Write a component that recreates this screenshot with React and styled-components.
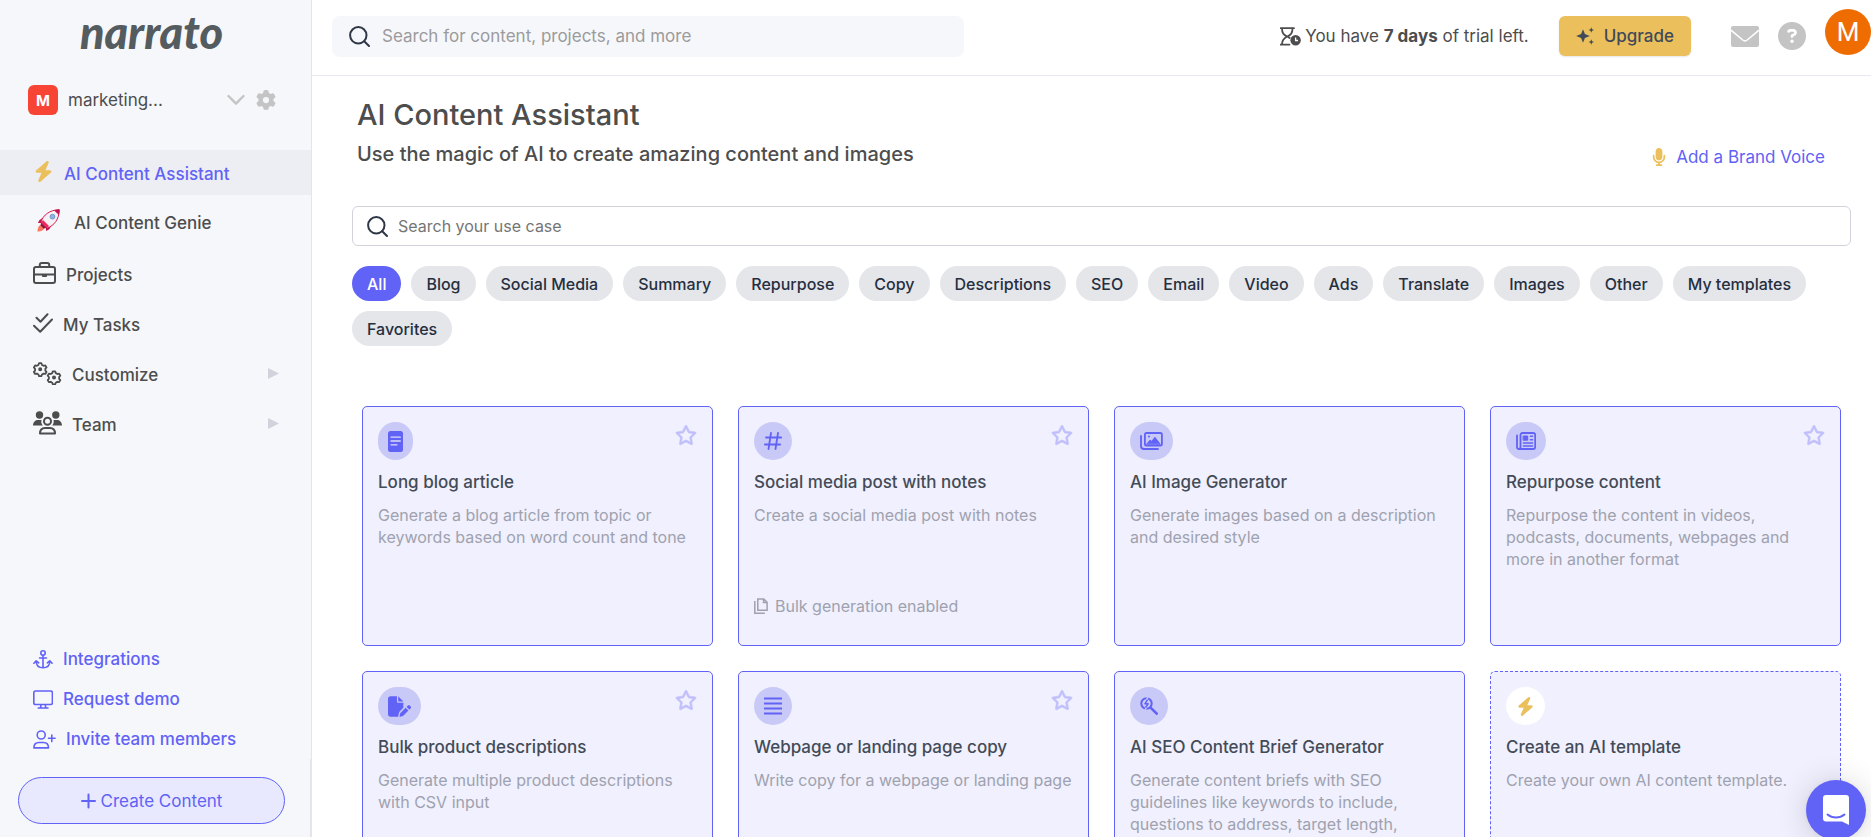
import React, { useState } from 'react';
import styled, { createGlobalStyle, css } from 'styled-components';
import { FaBolt, FaGear, FaCircleQuestion, FaMicrophone, FaFilePen, FaRegStar } from 'react-icons/fa6';

const GlobalStyle = createGlobalStyle`
  * {
    box-sizing: border-box;
  }

  body {
    margin: 0;
    background: #fff;
    color: #4d4d4d;
    font-family: 'Inter', 'Liberation Sans', sans-serif;
    overflow: hidden;
  }

  button,
  input {
    font-family: inherit;
  }

  svg {
    display: block;
    flex-shrink: 0;
  }
`;

const Layout = styled.div`
  display: flex;
  height: 100vh;
`;

/* ---------- sidebar ---------- */

const Sidebar = styled.aside`
  display: flex;
  flex-direction: column;
  flex: 0 0 312px;
  background: #f6f7fb;
  border-right: 1px solid #e4e4ea;
`;

const Logo = styled.a`
  display: block;
  height: 75px;
  padding: 8px 8px 0 0;
  color: #545c60;
  font-family: 'Lato', sans-serif;
  font-size: 45px;
  font-style: italic;
  font-weight: 900;
  line-height: 48px;
  text-align: center;
  text-decoration: none;
`;

const Workspace = styled.div`
  display: flex;
  align-items: center;
  height: 50px;
  margin-bottom: 25px;
  padding: 0 35px 0 28px;
`;

const WorkspaceBadge = styled.span`
  display: flex;
  align-items: center;
  justify-content: center;
  width: 30px;
  height: 30px;
  border-radius: 6px;
  background: #f74435;
  color: #fff;
  font-size: 15px;
  font-weight: 700;
`;

const WorkspaceName = styled.span`
  flex: 1;
  padding-left: 10px;
  font-size: 17px;
`;

const IconButton = styled.button`
  display: flex;
  padding: 0;
  border: 0;
  background: none;
  color: ${(props) => props.$color || '#c4c4c4'};
  cursor: pointer;
`;

const WorkspaceActions = styled.div`
  display: flex;
  align-items: center;
  gap: 11px;
`;

const Nav = styled.nav`
  display: flex;
  flex-direction: column;
`;

const NavItem = styled.a`
  display: flex;
  align-items: center;
  gap: ${(props) => (props.$inset ? 14 : 10)}px;
  height: ${(props) => props.$height || 50}px;
  padding: 0 32px 0 ${(props) => (props.$inset ? 37 : 33)}px;
  color: #4d4d4d;
  font-size: 17px;
  font-weight: 500;
  text-decoration: none;

  ${(props) =>
    props.$active &&
    css`
      padding-top: 2px;
      background: #edeef3;
      color: #6162f6;
    `}
`;

const NavIcon = styled.span`
  display: flex;
  justify-content: center;
  min-width: 20px;
  padding-bottom: 4px;
  color: ${(props) => props.$color || 'inherit'};
`;

const NavLabel = styled.span`
  flex: 1;
`;

const SidebarLinks = styled.div`
  display: flex;
  flex-direction: column;
  margin-top: auto;
`;

const SidebarLink = styled.a`
  display: flex;
  align-items: center;
  gap: 10px;
  height: 40px;
  padding-left: 33px;
  color: #6162f6;
  font-size: 17px;
  font-weight: 500;
  text-decoration: none;
`;

const SidebarFooter = styled.div`
  height: 78px;
  padding: 18px 25px 0 18px;
  border-right: 1px solid #e4e4ea;
`;

const CreateButton = styled.button`
  display: flex;
  align-items: center;
  justify-content: center;
  gap: 5px;
  width: 100%;
  height: 47px;
  border: 1px solid #6162f6;
  border-radius: 24px;
  background: #e8e9fe;
  color: #6162f6;
  font-size: 17px;
  cursor: pointer;
`;

/* ---------- top bar ---------- */

const Main = styled.div`
  display: flex;
  flex: 1;
  flex-direction: column;
  min-width: 0;
`;

const TopBar = styled.header`
  display: flex;
  align-items: center;
  flex: 0 0 76px;
  padding: 0 0 3px 20px;
  border-bottom: 1px solid #e8e8ef;
`;

const TopSearch = styled.label`
  display: flex;
  align-items: center;
  gap: 12px;
  flex: 0 1 632px;
  height: 41px;
  margin-right: auto;
  padding: 0 17px;
  border-radius: 8px;
  background: #f6f7fb;
  color: #2f3747;
`;

const SearchInput = styled.input`
  flex: 1;
  min-width: 0;
  padding: 0;
  border: 0;
  outline: 0;
  background: none;
  color: #4d4d4d;
  font-size: ${(props) => props.$size}px;

  &::placeholder {
    color: ${(props) => props.$placeholder};
    opacity: 1;
  }
`;

const Trial = styled.div`
  display: flex;
  align-items: center;
  gap: 4px;
  margin-right: 30px;
  font-size: 17px;
  white-space: nowrap;

  strong {
    font-weight: 700;
  }
`;

const UpgradeButton = styled.button`
  display: flex;
  align-items: center;
  gap: 9px;
  height: 40px;
  margin-right: 40px;
  padding: 0 17px;
  border: 0;
  border-radius: 6px;
  background: #ebc05c;
  box-shadow: 0 1px 2px rgba(0, 0, 0, 0.1);
  color: #424a59;
  font-size: 17px;
  font-weight: 500;
  cursor: pointer;
`;

const TopActions = styled.div`
  display: flex;
  align-items: center;
  gap: 19px;
`;

const Avatar = styled.button`
  width: 46px;
  height: 46px;
  margin-bottom: 8px;
  padding: 0;
  border: 0;
  border-radius: 50%;
  background: #ef6c00;
  color: #fff;
  font-family: 'Roboto', sans-serif;
  font-size: 26px;
  cursor: pointer;
`;

/* ---------- content ---------- */

const Content = styled.main`
  flex: 1;
  min-height: 0;
  padding: 20px 20px 0 40px;
  overflow: hidden;
`;

const PageHead = styled.div`
  display: flex;
  align-items: flex-end;
  justify-content: space-between;
  margin-bottom: 35px;
  padding: 0 26px 0 5px;
`;

const Title = styled.h1`
  margin: 0;
  font-size: 29px;
  font-weight: 500;
  line-height: 37px;
`;

const Subtitle = styled.p`
  margin: 9px 0 5px;
  font-size: 20px;
  font-weight: 500;
  line-height: 24px;
`;

const BrandVoice = styled.a`
  display: flex;
  align-items: center;
  gap: 8px;
  margin-bottom: 4px;
  color: #6162f6;
  font-size: 17px;
  line-height: 20px;
  text-decoration: none;
`;

const UseCaseSearch = styled.label`
  display: flex;
  align-items: center;
  gap: 10px;
  height: 40px;
  padding: 0 14px;
  border: 1px solid #d2d2dc;
  border-radius: 6px;
  color: #2f3747;
`;

const Chips = styled.div`
  display: flex;
  flex-wrap: wrap;
  gap: 10px;
  margin: 20px 0 60px;
`;

const Chip = styled.button`
  height: 35px;
  padding: 0 15px;
  border: 0;
  border-radius: 18px;
  background: ${(props) => (props.$active ? '#6162f6' : '#e5e6ea')};
  color: ${(props) => (props.$active ? '#fff' : '#252f3f')};
  font-size: 16px;
  font-weight: 500;
  cursor: pointer;
`;

const CardGrid = styled.div`
  display: grid;
  grid-template-columns: repeat(4, 1fr);
  gap: 25px;
  padding: 0 10px;
`;

const Card = styled.article`
  display: flex;
  flex-direction: column;
  min-height: 240px;
  padding: 15px;
  border: 1px ${(props) => (props.$dashed ? 'dashed' : 'solid')} #6162f6;
  border-radius: 5px;
  background: #f0f0fe;
`;

const CardTop = styled.div`
  display: flex;
  align-items: flex-start;
  justify-content: space-between;
`;

const CardIcon = styled.span`
  display: flex;
  align-items: center;
  justify-content: center;
  height: 38px;
  padding: 0 10px;
  border-radius: 19px;
  background: ${(props) => (props.$plain ? '#fff' : '#c9c9f7')};
  color: ${(props) => (props.$plain ? '#ebc05c' : '#6162f6')};
`;

const StarButton = styled(IconButton)`
  padding-top: 2px;

  path {
    stroke: currentColor;
    stroke-width: 16px;
  }
`;

const CardTitle = styled.h2`
  margin: 11px 0 11px;
  color: #434b57;
  font-size: 17px;
  font-weight: 500;
  line-height: 22px;
`;

const CardText = styled.p`
  margin: 0;
  color: #9fa2ae;
  font-size: 16px;
  line-height: 22px;
`;

const BulkNote = styled.div`
  display: flex;
  align-items: center;
  gap: 7px;
  margin-top: auto;
  padding-bottom: 13px;
  color: #9fa2ae;
  font-size: 16px;
  line-height: 22px;
`;

const ChatLauncher = styled.button`
  position: fixed;
  right: 5px;
  bottom: -3px;
  display: flex;
  align-items: center;
  justify-content: center;
  width: 60px;
  height: 60px;
  padding: 0;
  border: 0;
  border-radius: 50%;
  background: #6162f6;
  box-shadow: 0 1px 6px rgba(0, 0, 0, 0.06), 0 2px 32px rgba(0, 0, 0, 0.16);
  cursor: pointer;
`;

/* ---------- icons ---------- */

const line = {
  fill: 'none',
  stroke: 'currentColor',
  strokeWidth: 2,
  strokeLinecap: 'round',
  strokeLinejoin: 'round',
};

const SearchIcon = () => (
  <svg width="21" height="21" viewBox="0 0 21 21" {...line}>
    <circle cx="9.3" cy="9.3" r="8.2" />
    <path d="M15.2 15.2L20 20" />
  </svg>
);

const RocketIcon = () => (
  <svg width="23" height="23" viewBox="0 0 23 23">
    <path d="M1 14c1-3 3-5 7-5l-3 5zM9 22c3-1 5-3 5-7l-5 3z" fill="#c2154f" />
    <path d="M4 13C6 6 13 .8 22.300.7 22.300 10 17 17 10 19z" fill="#f4f0f4" stroke="#d81b56" strokeWidth="1" />
    <path d="M17 1.200C19 .8 21 .5 22.500.5 22.500 2 22.200 4 21.800 6z" fill="#c2154f" />
    <path d="M4 13.500L6 11l6 6-2.500 2z" fill="#ee2a5d" />
    <circle cx="15.500" cy="7.700" r="2.400" fill="#86b5e6" stroke="#5b7fb5" strokeWidth=".7" />
    <path d="M5 15.500C1.500 16 .6 19 .5 22.500 4 22.500 7 21.500 7.500 18z" fill="#fb7a5c" />
    <path d="M4 13.500l5.500 5.500-3 .6L3.600 16.500z" fill="#8e1443" />
  </svg>
);

const BriefcaseIcon = () => (
  <svg width="23" height="22" viewBox="0 0 23 22" {...line}>
    <rect x="1" y="5" width="21" height="16" rx="2" />
    <path d="M6.800 5V2.800c0-1.100.7-1.800 1.800-1.800h5.800c1.100 0 1.800.7 1.800 1.800V5M1 12.500h21" />
    <path d="M9 13h5v1.200c0 .5-.3.800-.8.800H9.800c-.5 0-.8-.3-.8-.8z" fill="currentColor" stroke="none" />
  </svg>
);

const TasksIcon = () => (
  <svg width="20" height="20" viewBox="0 0 20 20" {...line}>
    <path d="M3.500 4.800l4 4L14.500 1.200" />
    <path d="M1 12.800l6.200 6L19 6.500" />
  </svg>
);

// six-lobed cog outline used twice in the customize icon
const cog =
  'M-1.300-6.200h2.600l.7 1.900 1.700 1 2-.4 1.300 2.200-1.300 1.500v2l1.300 1.500-1.300 2.200-2-.4-1.700 1-.7 1.900h-2.600l-.7-1.900-1.700-1-2 .4-1.300-2.200 1.300-1.500v-2l-1.300-1.500 1.300-2.200 2 .4 1.700-1z';

const CustomizeIcon = () => (
  <svg width="29" height="23" viewBox="0 0 29 23" {...line}>
    <path transform="translate(7.200 6.800) scale(.9)" d={cog} />
    <circle cx="7.200" cy="7.200" r="1" />
    <path transform="translate(21 15) scale(.9)" d={cog} />
    <circle cx="21" cy="15.400" r="1" />
  </svg>
);

const TeamIcon = () => (
  <svg width="29" height="24" viewBox="0 0 29 24">
    <g fill="currentColor">
      <circle cx="6.500" cy="4" r="3.700" />
      <circle cx="22.800" cy="4" r="3.700" />
      <path d="M0 14.500C0 11 2.500 9 5 9h3.500c-.6 2 0 4 1.300 5.500zM29 14.500C29 11 26.500 9 24 9h-3.500c.6 2 0 4-1.300 5.500z" />
    </g>
    <g fill="none" stroke="currentColor" strokeWidth="2" strokeLinejoin="round">
      <circle cx="14.500" cy="10.300" r="3.500" />
      <path d="M7 22.500c0-3.800 2.300-5.600 5-5.600h5c2.700 0 5 1.800 5 5.600z" />
    </g>
  </svg>
);

const AnchorIcon = () => (
  <svg width="20" height="19" viewBox="0 0 20 19" {...line} strokeWidth="1.600">
    <circle cx="10" cy="3" r="2.200" />
    <path d="M10 5.200V17.800M6.500 8h7M.9 13.200l2.300-2.400 2.500 2M19.100 13.200l-2.300-2.400-2.500 2M3.200 11c0 4.500 2.800 6.800 6.800 6.800s6.800-2.300 6.800-6.800" />
  </svg>
);

const MonitorIcon = () => (
  <svg width="20" height="19" viewBox="0 0 20 19" {...line} strokeWidth="1.600">
    <rect x=".8" y="1" width="18.600" height="13.500" rx="1.800" />
    <path d="M8 14.800l-.5 3M12.300 14.800l.5 3M5.200 18h9.800" />
  </svg>
);

const InviteIcon = () => (
  <svg width="23" height="19" viewBox="0 0 23 19" {...line} strokeWidth="1.600">
    <circle cx="8.200" cy="5" r="4" />
    <path d="M.9 17.900c0-3.600 2-5.400 5-5.400h4.600c3 0 5 1.800 5 5.400zM18.800 5v6.600M15.500 8.300h6.600" />
  </svg>
);

const PlusIcon = () => (
  <svg width="15" height="16" viewBox="0 0 15 16" {...line}>
    <path d="M7.500 1.500v13M1 8h13" />
  </svg>
);

const ChevronIcon = () => (
  <svg width="18" height="12" viewBox="0 0 18 12" {...line} strokeWidth="2.400">
    <path d="M1.500 2L9 9.700 16.500 2" />
  </svg>
);

const ArrowIcon = () => (
  <svg width="11" height="15" viewBox="0 0 11 15">
    <path d="M0 0l11 5.500L0 11z" fill="#d2d2dc" />
  </svg>
);

const HourglassIcon = () => (
  <svg width="21" height="19" viewBox="0 0 21 19">
    <path
      d="M.5 1.200h13.500M.5 17.600h9M2 1.500c0 4.500 1.500 6 5 8-3.500 2-5 3.600-5 8M12.500 1.500c0 4.500-1.500 6-5 8l2.200 1.500"
      {...line}
      strokeWidth="1.800"
    />
    <circle cx="15.600" cy="13.300" r="5.200" fill="currentColor" />
    <path d="M15.600 10.500v3h2.400" fill="none" stroke="#fff" strokeWidth="1.300" />
  </svg>
);

const SparkleIcon = () => (
  <svg width="19" height="18" viewBox="0 0 19 18" fill="currentColor">
    <path d="M7 2.200l1.900 4.900 4.900 1.900-4.900 1.900L7 15.800l-1.900-4.900L.2 9l4.900-1.900z" />
    <path d="M15.300.2l.8 2 2 .8-2 .8-.8 2-.8-2-2-.8 2-.8zM15.300 12.200l.8 2 2 .8-2 .8-.8 2-.8-2-2-.8 2-.8z" />
  </svg>
);

const MailIcon = () => (
  <svg width="28" height="21" viewBox="0 0 28 21">
    <rect width="28" height="21" rx="2" fill="currentColor" />
    <path d="M0 4.200l11.800 9.800c1.400 1.100 3 1.100 4.400 0L28 4.200" fill="none" stroke="#fff" strokeWidth="1.500" />
  </svg>
);

const ArticleIcon = () => (
  <svg width="15" height="21" viewBox="0 0 15 21">
    <rect width="15" height="21" rx="2.500" fill="currentColor" />
    <path d="M3 6.200h9.300M3 10h9.300M3 13.800h6" stroke="#dcdcfb" strokeWidth="1.300" strokeLinecap="round" />
  </svg>
);

const HashIcon = () => (
  <svg width="18" height="18" viewBox="0 0 18 18" {...line} strokeWidth="1.800">
    <path d="M7 1L4.500 17M14 1l-2.500 16M2 5.500h15.200M.9 12.500h15.200" />
  </svg>
);

const ImagesIcon = () => (
  <svg width="23" height="18" viewBox="0 0 23 18" {...line} strokeWidth="1.800">
    <rect x="4.900" y="1" width="17" height="12.500" rx="1.600" />
    <path d="M1 4v10c0 2 1 3 3 3h14" />
    <path d="M7 11.800l3.200-3.800 1.500 1.500 3.200-4.200 5 6.500z" fill="currentColor" strokeWidth="1" />
    <circle cx="9" cy="4.600" r="1" fill="currentColor" stroke="none" />
  </svg>
);

const NewsIcon = () => (
  <svg width="20" height="18" viewBox="0 0 20 18" {...line} strokeWidth="1.800">
    <path d="M4.500 15V3c0-1.300.7-2 2-2h10.700c1.300 0 2 .7 2 2v12c0 1.300-.7 2-2 2H2.800C1.600 17 1 16.200 1 15V3.500M4.500 15c0 1.200-.7 2-1.700 2" />
    <path d="M7.500 4h4.200v4.200H7.500z" fill="currentColor" strokeWidth="1" />
    <path d="M14.500 4.300h2M14.500 7.800h2M7.500 11h9M7.500 14h9" strokeWidth="1.600" />
  </svg>
);

const LinesIcon = () => (
  <svg width="18" height="18" viewBox="0 0 18 18">
    <path d="M0 1.500h18M0 6.500h18M0 11.500h18M0 16.500h18" stroke="currentColor" strokeWidth="2" />
  </svg>
);

const SearchBoltIcon = () => (
  <svg width="18" height="18" viewBox="0 0 18 18" {...line}>
    <circle cx="6.500" cy="6.500" r="5.200" strokeWidth="2" />
    <path d="M10.800 10.800l5.900 5.900" strokeWidth="2.600" />
    <path d="M7.600 0L6.800 3M6.200 10L5.400 13" stroke="#c9c9f7" strokeWidth="1.600" />
    <path d="M7.300 3.200L4.900 6.800h3.200L5.900 10" strokeWidth="1.500" />
  </svg>
);

const CopyIcon = () => (
  <svg width="14" height="16" viewBox="0 0 14 16" fill="none" stroke="currentColor" strokeWidth="1.500">
    <path d="M3.800 .9h6l3.300 3.400v8H3.800zM9.500 1v3.600h3.500M.8 3v12.200h10" />
  </svg>
);

const ChatIcon = () => (
  <svg width="28" height="32" viewBox="0 0 28 32">
    <path d="M4 1h20a3 3 0 0 1 3 3v27l-7-3.500H4a3 3 0 0 1-3-3V4a3 3 0 0 1 3-3z" fill="#fff" />
    <path d="M5.500 20.500c5 4 12 4 17 0" fill="none" stroke="#6162f6" strokeWidth="2" strokeLinecap="round" />
  </svg>
);

/* ---------- data ---------- */

const navItems = [
  { label: 'AI Content Assistant', icon: <FaBolt size={21} />, color: '#ebc05c', height: 45, active: true },
  { label: 'AI Content Genie', icon: <RocketIcon />, height: 55, inset: true },
  { label: 'Projects', icon: <BriefcaseIcon /> },
  { label: 'My Tasks', icon: <TasksIcon /> },
  { label: 'Customize', icon: <CustomizeIcon />, expandable: true },
  { label: 'Team', icon: <TeamIcon />, expandable: true },
];

const sideLinks = [
  { label: 'Integrations', icon: <AnchorIcon /> },
  { label: 'Request demo', icon: <MonitorIcon /> },
  { label: 'Invite team members', icon: <InviteIcon /> },
];

const categories = [
  'All',
  'Blog',
  'Social Media',
  'Summary',
  'Repurpose',
  'Copy',
  'Descriptions',
  'SEO',
  'Email',
  'Video',
  'Ads',
  'Translate',
  'Images',
  'Other',
  'My templates',
  'Favorites',
];

const cards = [
  {
    title: 'Long blog article',
    text: 'Generate a blog article from topic or keywords based on word count and tone',
    icon: <ArticleIcon />,
    star: true,
  },
  {
    title: 'Social media post with notes',
    text: 'Create a social media post with notes',
    icon: <HashIcon />,
    star: true,
    bulk: true,
  },
  {
    title: 'AI Image Generator',
    text: 'Generate images based on a description and desired style',
    icon: <ImagesIcon />,
  },
  {
    title: 'Repurpose content',
    text: 'Repurpose the content in videos, podcasts, documents, webpages and more in another format',
    icon: <NewsIcon />,
    star: true,
  },
  {
    title: 'Bulk product descriptions',
    text: 'Generate multiple product descriptions with CSV input',
    icon: <FaFilePen size={23} />,
    star: true,
  },
  {
    title: 'Webpage or landing page copy',
    text: 'Write copy for a webpage or landing page',
    icon: <LinesIcon />,
    star: true,
  },
  {
    title: 'AI SEO Content Brief Generator',
    text: 'Generate content briefs with SEO guidelines like keywords to include, questions to address, target length,',
    icon: <SearchBoltIcon />,
  },
  {
    title: 'Create an AI template',
    text: 'Create your own AI content template.',
    icon: <FaBolt size={19} />,
    dashed: true,
  },
];

const App = () => {
  const [category, setCategory] = useState('All');

  return (
    <>
      <GlobalStyle />
      <Layout>
        <Sidebar>
          <Logo href="#">narrato</Logo>
          <Workspace>
            <WorkspaceBadge>M</WorkspaceBadge>
            <WorkspaceName>marketing...</WorkspaceName>
            <WorkspaceActions>
              <IconButton aria-label="Switch workspace">
                <ChevronIcon />
              </IconButton>
              <IconButton aria-label="Settings">
                <FaGear size={20} />
              </IconButton>
            </WorkspaceActions>
          </Workspace>
          <Nav>
            {navItems.map((item) => (
              <NavItem key={item.label} href="#" $active={item.active} $height={item.height} $inset={item.inset}>
                <NavIcon $color={item.color}>{item.icon}</NavIcon>
                <NavLabel>{item.label}</NavLabel>
                {item.expandable && <ArrowIcon />}
              </NavItem>
            ))}
          </Nav>
          <SidebarLinks>
            {sideLinks.map((link) => (
              <SidebarLink key={link.label} href="#">
                {link.icon}
                {link.label}
              </SidebarLink>
            ))}
          </SidebarLinks>
          <SidebarFooter>
            <CreateButton>
              <PlusIcon />
              Create Content
            </CreateButton>
          </SidebarFooter>
        </Sidebar>

        <Main>
          <TopBar>
            <TopSearch>
              <SearchIcon />
              <SearchInput
                type="text"
                aria-label="Search"
                placeholder="Search for content, projects, and more"
                $size={17}
                $placeholder="#9b9b9b"
              />
            </TopSearch>
            <Trial>
              <HourglassIcon />
              <span>
                You have <strong>7 days</strong> of trial left.
              </span>
            </Trial>
            <UpgradeButton>
              <SparkleIcon />
              Upgrade
            </UpgradeButton>
            <TopActions>
              <IconButton aria-label="Messages">
                <MailIcon />
              </IconButton>
              <IconButton aria-label="Help">
                <FaCircleQuestion size={28} />
              </IconButton>
              <Avatar aria-label="Account">M</Avatar>
            </TopActions>
          </TopBar>

          <Content>
            <PageHead>
              <div>
                <Title>AI Content Assistant</Title>
                <Subtitle>Use the magic of AI to create amazing content and images</Subtitle>
              </div>
              <BrandVoice href="#">
                <FaMicrophone size={18} color="#ebc05c" />
                Add a Brand Voice
              </BrandVoice>
            </PageHead>
            <UseCaseSearch>
              <SearchIcon />
              <SearchInput
                type="text"
                aria-label="Search your use case"
                placeholder="Search your use case"
                $size={16}
                $placeholder="#757575"
              />
            </UseCaseSearch>
            <Chips>
              {categories.map((name) => (
                <Chip key={name} $active={name === category} onClick={() => setCategory(name)}>
                  {name}
                </Chip>
              ))}
            </Chips>
            <CardGrid>
              {cards.map((card) => (
                <Card key={card.title} $dashed={card.dashed}>
                  <CardTop>
                    <CardIcon $plain={card.dashed}>{card.icon}</CardIcon>
                    {card.star && (
                      <StarButton aria-label="Add to favorites" $color="#c0bffb">
                        <FaRegStar size={22} />
                      </StarButton>
                    )}
                  </CardTop>
                  <CardTitle>{card.title}</CardTitle>
                  <CardText>{card.text}</CardText>
                  {card.bulk && (
                    <BulkNote>
                      <CopyIcon />
                      Bulk generation enabled
                    </BulkNote>
                  )}
                </Card>
              ))}
            </CardGrid>
          </Content>
        </Main>
      </Layout>
      <ChatLauncher aria-label="Open chat">
        <ChatIcon />
      </ChatLauncher>
    </>
  );
};

export default App;
